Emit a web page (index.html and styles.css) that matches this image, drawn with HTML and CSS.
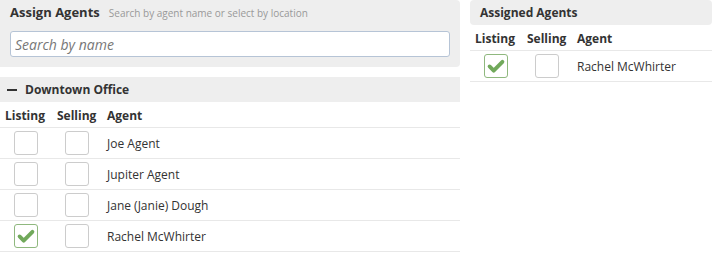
FILE: index.html
```html
<!DOCTYPE html>
<html>
<head>
<meta charset="utf-8">
<link rel="stylesheet" href="styles.css">
</head>
<body>
<div class="page">
  <div class="left">
    <div class="search-box">
      <div class="search-title"><span class="title">Assign Agents</span><span class="hint">Search by agent name or select by location</span></div>
      <input class="search-input" type="text" placeholder="Search by name">
    </div>
    <div class="group-head"><span class="minus"></span>Downtown Office</div>
    <table class="agents">
      <thead><tr><th class="c1">Listing</th><th class="c2">Selling</th><th>Agent</th></tr></thead>
      <tbody>
        <tr><td class="c1"><span class="cb"></span></td><td class="c2"><span class="cb"></span></td><td>Joe Agent</td></tr>
        <tr><td class="c1"><span class="cb"></span></td><td class="c2"><span class="cb"></span></td><td>Jupiter Agent</td></tr>
        <tr><td class="c1"><span class="cb"></span></td><td class="c2"><span class="cb"></span></td><td>Jane (Janie) Dough</td></tr>
        <tr><td class="c1"><span class="cb on"><svg viewBox="0 0 24 24" width="22" height="22"><path d="M5 12.5 L9.5 17 L19 7.5" fill="none" stroke="#71a95b" stroke-width="4.2" stroke-linecap="round" stroke-linejoin="round"/></svg></span></td><td class="c2"><span class="cb"></span></td><td>Rachel McWhirter</td></tr>
      </tbody>
    </table>
  </div>
  <div class="right">
    <div class="assigned-head">Assigned Agents</div>
    <table class="agents">
      <thead><tr><th class="c1">Listing</th><th class="c2">Selling</th><th>Agent</th></tr></thead>
      <tbody>
        <tr><td class="c1"><span class="cb on"><svg viewBox="0 0 24 24" width="22" height="22"><path d="M5 12.5 L9.5 17 L19 7.5" fill="none" stroke="#71a95b" stroke-width="4.2" stroke-linecap="round" stroke-linejoin="round"/></svg></span></td><td class="c2"><span class="cb"></span></td><td>Rachel McWhirter</td></tr>
      </tbody>
    </table>
  </div>
</div>
</body>
</html>
```
FILE: styles.css
```css
* { box-sizing: border-box; }
body {
  margin: 0;
  background: #fff;
  font-family: "Open Sans", "Noto Sans", sans-serif;
  font-size: 12px;
  color: #333;
}
.page {
  display: flex;
  gap: 10px;
  width: 712px;
}
.left { width: 460px; flex: none; }
.right { flex: 1; }
.search-box {
  background: #eee;
  border-radius: 0 4px 4px 0;
  padding: 3px 10px 10px 10px;
  height: 67px;
}
.search-title {
  display: flex;
  align-items: baseline;
  height: 23px;
}
.title {
  font-weight: bold;
  font-size: 13px;
  color: #333;
}
.hint {
  font-size: 10px;
  color: #999;
  margin-left: 9px;
}
.search-input {
  display: block;
  width: 440px;
  height: 26px;
  margin-top: 5px;
  border: 1px solid #b6c4d6;
  border-radius: 3px;
  background: #fff;
  padding: 0 4px;
  font-family: "Open Sans", "Noto Sans", sans-serif;
  font-size: 14px;
  outline: none;
}
.search-input::placeholder {
  color: #777;
  font-style: italic;
}
.group-head {
  margin-top: 10px;
  height: 25px;
  background: #eee;
  font-weight: bold;
  font-size: 12px;
  display: flex;
  align-items: center;
  padding-left: 7px;
  color: #333;
}
.minus {
  display: inline-block;
  width: 10px;
  height: 2px;
  background: #333;
  margin-right: 8px;
}
.agents {
  width: 100%;
  border-collapse: collapse;
}
.agents th {
  text-align: left;
  font-weight: bold;
  font-size: 12px;
  padding: 5px 5px 3px 5px;
  height: 24px;
  color: #333;
  border-bottom: 1px solid #e8e8e8;
}
.agents td {
  padding: 3px 5px;
  height: 31px;
  border-bottom: 1px solid #e8e8e8;
  vertical-align: middle;
}
.agents th.c1, .agents td.c1 { width: 52px; }
.agents th.c2, .agents td.c2 { width: 50px; }
.agents td.c1, .agents td.c2 { text-align: center; }
.cb {
  display: inline-block;
  width: 24px;
  height: 24px;
  border: 1px solid #ccc;
  border-radius: 3px;
  vertical-align: middle;
  background: #fff;
}
.cb.on { border-color: #8fb87e; }
.cb svg { display: block; }
.assigned-head {
  height: 25px;
  background: #eee;
  border-radius: 4px;
  font-weight: bold;
  font-size: 12px;
  padding-left: 10px;
  display: flex;
  align-items: center;
}
.right .agents th { padding-top: 5px; height: 25px; }
```
